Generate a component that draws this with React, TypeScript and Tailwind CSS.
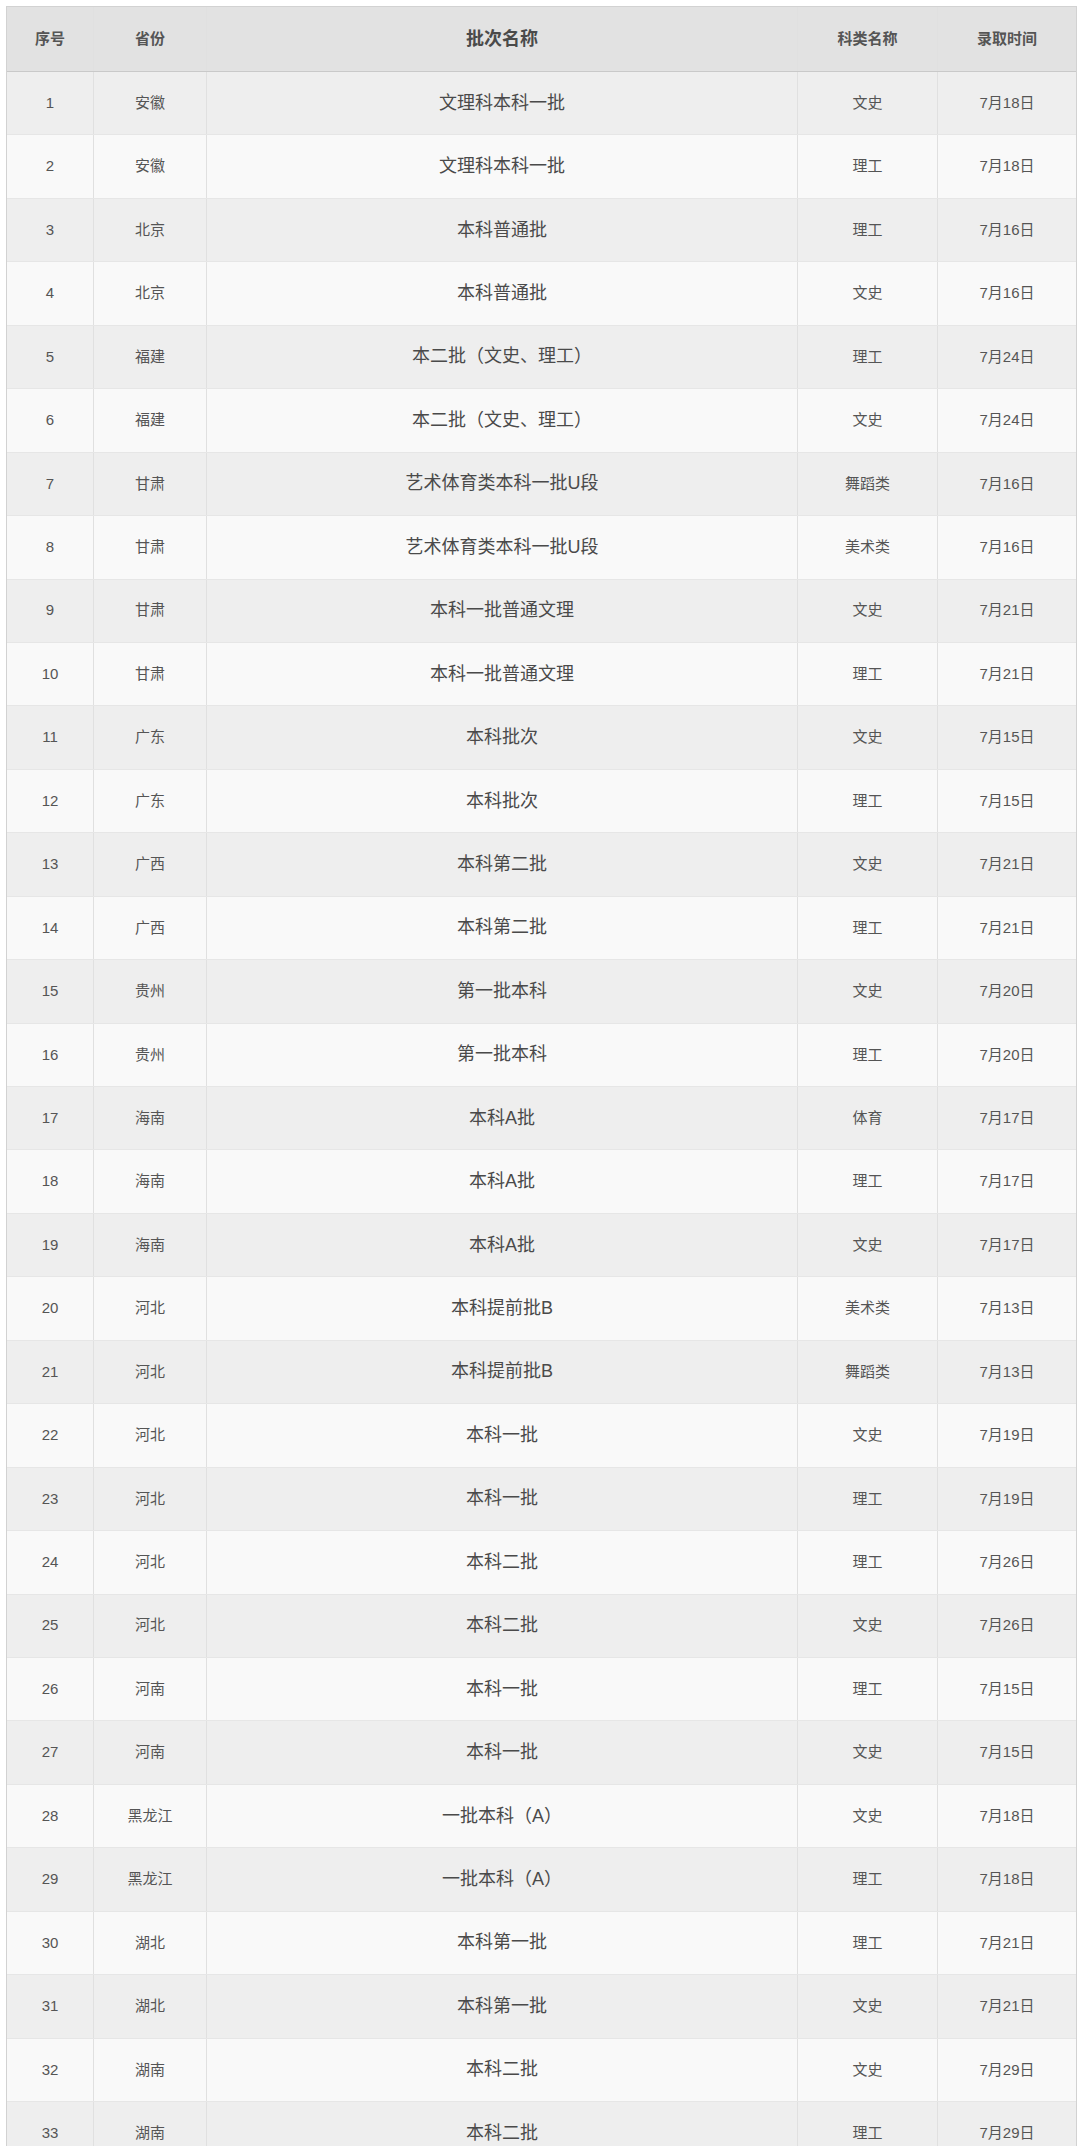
import React from "react";

// Admission batches table (mobile screenshot style): 5 columns, striped rows.
type Row = [string, string, string, string];

const rows: Row[] = [
  ["安徽", "文理科本科一批", "文史", "7月18日"],
  ["安徽", "文理科本科一批", "理工", "7月18日"],
  ["北京", "本科普通批", "理工", "7月16日"],
  ["北京", "本科普通批", "文史", "7月16日"],
  ["福建", "本二批（文史、理工）", "理工", "7月24日"],
  ["福建", "本二批（文史、理工）", "文史", "7月24日"],
  ["甘肃", "艺术体育类本科一批U段", "舞蹈类", "7月16日"],
  ["甘肃", "艺术体育类本科一批U段", "美术类", "7月16日"],
  ["甘肃", "本科一批普通文理", "文史", "7月21日"],
  ["甘肃", "本科一批普通文理", "理工", "7月21日"],
  ["广东", "本科批次", "文史", "7月15日"],
  ["广东", "本科批次", "理工", "7月15日"],
  ["广西", "本科第二批", "文史", "7月21日"],
  ["广西", "本科第二批", "理工", "7月21日"],
  ["贵州", "第一批本科", "文史", "7月20日"],
  ["贵州", "第一批本科", "理工", "7月20日"],
  ["海南", "本科A批", "体育", "7月17日"],
  ["海南", "本科A批", "理工", "7月17日"],
  ["海南", "本科A批", "文史", "7月17日"],
  ["河北", "本科提前批B", "美术类", "7月13日"],
  ["河北", "本科提前批B", "舞蹈类", "7月13日"],
  ["河北", "本科一批", "文史", "7月19日"],
  ["河北", "本科一批", "理工", "7月19日"],
  ["河北", "本科二批", "理工", "7月26日"],
  ["河北", "本科二批", "文史", "7月26日"],
  ["河南", "本科一批", "理工", "7月15日"],
  ["河南", "本科一批", "文史", "7月15日"],
  ["黑龙江", "一批本科（A）", "文史", "7月18日"],
  ["黑龙江", "一批本科（A）", "理工", "7月18日"],
  ["湖北", "本科第一批", "理工", "7月21日"],
  ["湖北", "本科第一批", "文史", "7月21日"],
  ["湖南", "本科二批", "文史", "7月29日"],
  ["湖南", "本科二批", "理工", "7月29日"],
];

const grid = "grid grid-cols-[87px_113px_591px_140px_138px]";
const cell = "flex items-center justify-center border-r border-[#e0e0e0] last:border-r-0";

export default function App() {
  return (
    <div
      className="h-[2146px] overflow-hidden bg-white pl-[6px] pt-[6px]"
      style={{ fontFamily: '"Liberation Sans", "Noto Sans CJK SC", sans-serif' }}
    >
      <div className="w-[1071px] border border-[#d2d2d2] text-[#555]">
        {/* Header */}
        <div className={`${grid} h-[65px] border-b border-[#c9c9c9] bg-[#e2e2e2] font-bold`}>
          <div className={`${cell} text-[15px]`}>序号</div>
          <div className={`${cell} text-[15px]`}>省份</div>
          <div className={`${cell} text-[18px] text-[#4a4a4a]`}>批次名称</div>
          <div className={`${cell} text-[15px]`}>科类名称</div>
          <div className={`${cell} text-[15px]`}>录取时间</div>
        </div>

        {/* Body */}
        {rows.map(([prov, batch, kind, date], i) => (
          <div
            key={i}
            className={`${grid} h-[63.45px] border-b border-[#e6e6e6] ${
              i % 2 === 0 ? "bg-[#eeeeee]" : "bg-[#f9f9f9]"
            }`}
          >
            <div className={`${cell} text-[15px]`}>{i + 1}</div>
            <div className={`${cell} text-[15px]`}>{prov}</div>
            <div className={`${cell} text-[18px] text-[#4a4a4a]`}>{batch}</div>
            <div className={`${cell} text-[15px]`}>{kind}</div>
            <div className={`${cell} text-[15px]`}>{date}</div>
          </div>
        ))}
      </div>
    </div>
  );
}
